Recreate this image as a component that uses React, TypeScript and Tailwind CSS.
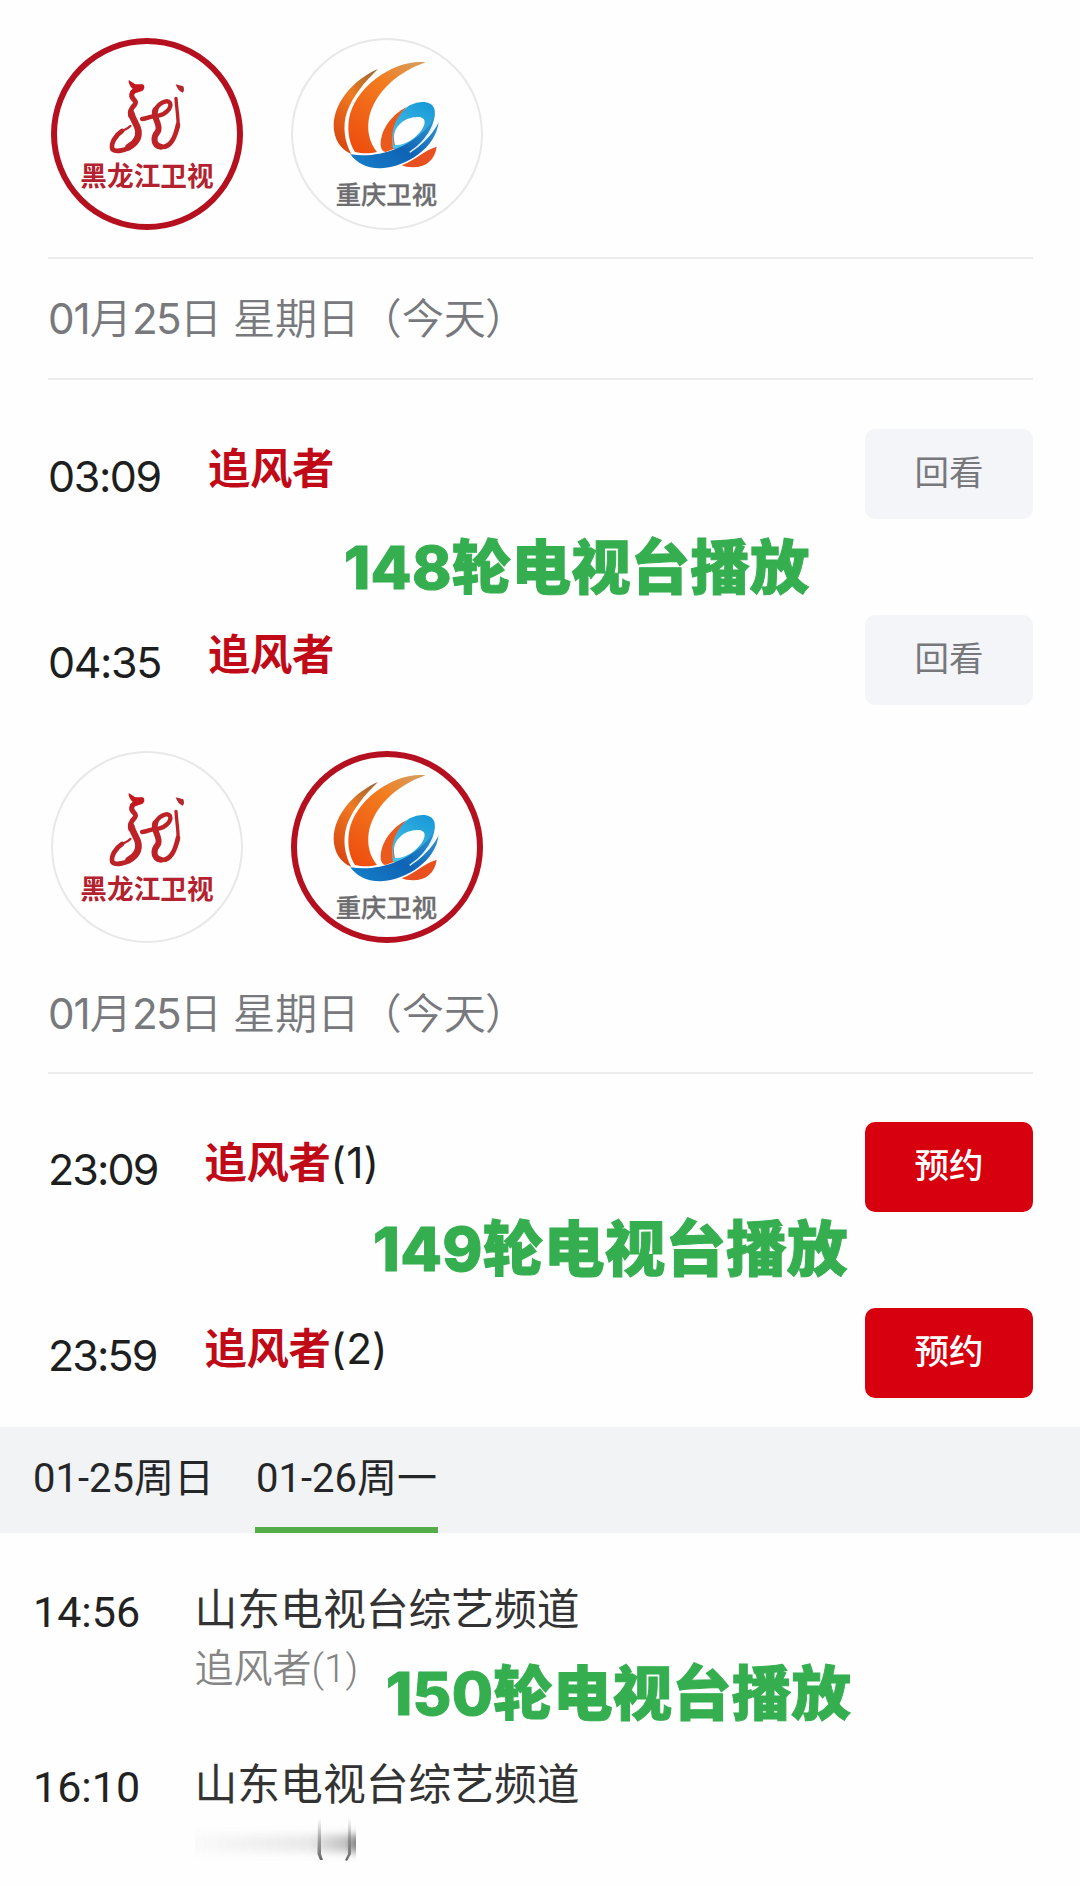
import React from 'react';

interface Programme {
  time: string;
  title: string;
  episode?: string;
}

const replayRows: Programme[] = [
  { time: '03:09', title: '追风者' },
  { time: '04:35', title: '追风者' },
];

const bookingRows: Programme[] = [
  { time: '23:09', title: '追风者', episode: '(1)' },
  { time: '23:59', title: '追风者', episode: '(2)' },
];

function HeilongjiangLogo() {
  return (
    <svg viewBox="65 54 576 576" className="w-full h-full">
      <g fill="none" stroke="#bd2226" strokeLinecap="round" strokeLinejoin="round">
        <path d="M309 218 C298 238 328 240 316 254 C306 264 300 276 304 288" strokeWidth="15" />
        <path d="M306 280 C310 300 324 312 327 332 C330 354 318 370 298 381" strokeWidth="20" />
        <path d="M314 372 C292 392 258 398 249 387 C244 370 258 346 278 333" strokeWidth="14" />
        <path d="M270 338 C282 330 296 326 303 318" strokeWidth="7" />
        <path d="M338 297 C356 296 366 286 388 287 C408 284 428 264 422 249 C414 236 386 250 377 272" strokeWidth="13" />
        <path d="M378 270 C368 292 396 312 386 334 C370 352 372 376 394 380" strokeWidth="18" />
        <path d="M390 380 C424 388 438 350 446 314" strokeWidth="14" />
        <path d="M446 322 C448 296 442 270 440 235" strokeWidth="10" />
      </g>
      <path d="M298 180 L318 193 L341 193 Q350 202 340 212 L318 220 L303 228 Q300 214 310 206 Q296 194 298 180Z" fill="#c4161c" />
      <path d="M439 193 L462 199 Q467 212 460 218 Q446 214 439 193Z" fill="#b22a30" />
      <text x="353" y="498" textAnchor="middle" fontSize="81" fontWeight="700" fill="#b3222e" textLength="400" lengthAdjust="spacingAndGlyphs">
        黑龙江卫视
      </text>
    </svg>
  );
}

function ChongqingLogo({ id }: { id: string }) {
  return (
    <svg viewBox="36 54 576 576" className="w-full h-full">
      <defs>
        <linearGradient id={`${id}-orange`} x1="0.8" y1="0" x2="0.2" y2="1">
          <stop offset="0" stopColor="#d99a55" />
          <stop offset="0.3" stopColor="#f27d1f" />
          <stop offset="1" stopColor="#ee4f0f" />
        </linearGradient>
        <linearGradient id={`${id}-rim`} x1="0.8" y1="0" x2="0.2" y2="1">
          <stop offset="0" stopColor="#a8682e" />
          <stop offset="0.4" stopColor="#ef7a22" />
          <stop offset="1" stopColor="#d8430f" />
        </linearGradient>
        <linearGradient id={`${id}-blue`} x1="1" y1="0" x2="0" y2="1">
          <stop offset="0" stopColor="#3aa3d8" />
          <stop offset="0.55" stopColor="#0f63b4" />
          <stop offset="1" stopColor="#1681cc" />
        </linearGradient>
        <linearGradient id={`${id}-cyan`} x1="0.7" y1="0" x2="0.2" y2="1">
          <stop offset="0" stopColor="#1a9bd7" />
          <stop offset="1" stopColor="#4cc3ea" />
        </linearGradient>
      </defs>
      <path d="M297 147 C232 174 164 242 164 318 C165 358 184 388 217 402 C196 364 190 318 204 276 C222 228 256 186 297 147Z" fill={`url(#${id}-rim)`} />
      <path d="M440 127 C350 116 226 198 210 298 C204 338 212 372 228 396 C252 402 276 400 294 396 C272 368 264 336 269 300 C282 226 346 160 440 127Z" fill={`url(#${id}-orange)`} />
      <path d="M382 262 C338 284 304 330 305 376 C306 388 312 396 320 396 L352 384 C338 356 344 312 382 262Z" fill="#ea5a1c" />
      <path d="M473 380 C468 420 440 442 402 442 C388 441 376 440 368 436 C410 420 434 392 473 380Z" fill="#e8501f" />
      <path fillRule="evenodd" d="M342 384 C332 340 350 282 392 256 C424 240 458 242 466 266 C474 296 452 346 412 374 C388 390 362 396 342 384Z M344 374 C372 380 410 356 428 330 C442 308 440 292 418 291 C372 290 336 326 344 374Z" fill={`url(#${id}-cyan)`} />
      <path d="M466 266 C470 292 450 322 424 342 C378 384 296 416 214 403 C232 428 262 446 306 445 C384 440 470 384 479 306 C468 330 444 364 402 392 C436 362 470 320 466 266Z" fill={`url(#${id}-blue)`} />
      <path d="M392 397 C424 376 450 344 464 314" fill="none" stroke="#d9effa" strokeWidth="4" />
      <text x="322" y="552" textAnchor="middle" fontSize="76" fontWeight="500" fill="#6d6d6f" stroke="#6d6d6f" strokeWidth="1" textLength="304" lengthAdjust="spacingAndGlyphs">
        重庆卫视
      </text>
    </svg>
  );
}

function Channel({ active, children }: { active: boolean; children: React.ReactNode }) {
  return (
    <div className="relative w-48 h-48 rounded-full">
      {children}
      <div
        className={`absolute inset-0 rounded-full ${
          active ? 'border-6 border-[#b5101f]' : 'border-2 border-[#e8e8e9]'
        }`}
      />
    </div>
  );
}

function DateLabel() {
  return (
    <div className="flex items-center text-[42.2px] leading-none text-[#77797d] whitespace-pre">
      <span className="tracking-[-1px]">01</span>
      <span className="font-[350]">月</span>
      <span className="tracking-[-1.8px]">25</span>
      <span className="font-[350]">日</span>
      <span className="ml-[11px] font-[350]">星期日（今天</span>
      <span className="-ml-px font-[350]">）</span>
    </div>
  );
}

function ProgrammeRow({ row, kind }: { row: Programme; kind: 'replay' | 'book' }) {
  return (
    <div className="flex items-center h-[90px]">
      <div
        className={`text-[43px] leading-none text-[#1d1e20] ${
          kind === 'replay' ? 'w-[160px] pt-[4px] tracking-[-1.4px]' : 'w-[156.5px] pt-[4px] tracking-[-1.9px]'
        }`}
      >
        {row.time}
      </div>
      <div className={`flex-1 text-[42.3px] leading-none text-[#1d1e20] ${kind === 'replay' ? 'pb-[10px]' : 'pb-[8px]'}`}>
        <span className="font-bold text-[#c00a18] tracking-[-0.3px]">{row.title}</span>
        <span className="tracking-[0.2px]">{row.episode}</span>
      </div>
      <button
        className={`w-[168px] h-[90px] rounded-[10px] text-[34.5px] leading-none pb-[1px] ${
          kind === 'replay' ? 'bg-[#f4f5f9] text-[#77787c]' : 'bg-[#d6000f] text-white font-medium'
        }`}
      >
        {kind === 'replay' ? '回看' : '预约'}
      </button>
    </div>
  );
}

function Caption({ round, large }: { round: number; large?: boolean }) {
  return (
    <div
      className={`flex items-center leading-none text-[#35ae50] whitespace-nowrap font-[Inter,'Noto_Sans_CJK_SC',sans-serif] [-webkit-text-stroke:1px_#35ae50] ${
        large ? 'text-[60.8px]' : 'text-[59.6px]'
      }`}
    >
      <span className="font-extrabold tracking-[0.3px]">{round}</span>
      <span className="font-black">轮电视台播放</span>
    </div>
  );
}

export default function App() {
  return (
    <div className="relative w-[1080px] h-[1886px] overflow-hidden bg-[#fefefe] font-[Inter,'Noto_Sans_CJK_SC',sans-serif]">
      {/* Heilongjiang schedule */}
      <section className="pt-[38px] pl-12 pr-[47px]">
        <div className="flex gap-12 pl-[3px] pb-[27px] border-b-2 border-[#ececed]">
          <Channel active>
            <HeilongjiangLogo />
          </Channel>
          <Channel active={false}>
            <ChongqingLogo id="cq-top" />
          </Channel>
        </div>
        <div className="flex items-center h-[121px] pt-[2px] border-b-2 border-[#ececed]">
          <DateLabel />
        </div>
        <div className="relative flex flex-col gap-24 pt-[49px]">
          {replayRows.map((row) => (
            <ProgrammeRow key={row.time} row={row} kind="replay" />
          ))}
          <div className="absolute left-[296px] top-[158px]">
            <Caption round={148} />
          </div>
        </div>
      </section>

      {/* Chongqing schedule */}
      <section className="pt-[46px] pl-12 pr-[47px]">
        <div className="flex gap-12 pl-[3px]">
          <Channel active={false}>
            <HeilongjiangLogo />
          </Channel>
          <Channel active>
            <ChongqingLogo id="cq-bottom" />
          </Channel>
        </div>
        <div className="flex items-center h-[131px] pt-[14px] border-b-2 border-[#ececed]">
          <DateLabel />
        </div>
        <div className="relative flex flex-col gap-24 pt-[48px]">
          {bookingRows.map((row) => (
            <ProgrammeRow key={row.time} row={row} kind="book" />
          ))}
          <div className="absolute left-[325px] top-[145px]">
            <Caption round={149} large />
          </div>
        </div>
      </section>

      {/* Day tabs */}
      <nav className="flex mt-[29px] h-[106px] pl-[33px] gap-[41px] bg-[#f2f3f5] text-[40px] leading-none text-[#252628] font-[Roboto,'Noto_Sans_CJK_SC',sans-serif]">
        <div className="pt-[32px]">01-25周日</div>
        <div className="pt-[32px] px-px border-b-6 border-[#54ad49]">01-26周一</div>
      </nav>

      {/* Shandong schedule */}
      <section className="relative pl-[33px] pt-[56px] font-[Roboto,'Noto_Sans_CJK_SC',sans-serif]">
        <div className="flex h-[175px]">
          <div className="w-[161.5px] pt-[2px] text-[43px] leading-none text-[#222]">14:56</div>
          <div className="leading-none">
            <div className="text-[42.8px] leading-none text-[#333]">山东电视台综艺频道</div>
            <div className="mt-[18px] text-[39px] leading-none text-[#858585] font-[350]">追风者(1)</div>
          </div>
        </div>
        <div className="flex h-[175px]">
          <div className="w-[161.5px] pt-[2px] text-[43px] leading-none text-[#222]">16:10</div>
          <div>
            <div className="text-[42.8px] leading-none text-[#333]">山东电视台综艺频道</div>
            {/* smeared-out subtitle */}
            <svg width="170" height="56" viewBox="0 0 170 56" className="mt-[11px]">
              <defs>
                <linearGradient id="smear" x1="0" x2="1" y1="0" y2="0">
                  <stop offset="0" stopColor="#999" stopOpacity="0.05" />
                  <stop offset="0.7" stopColor="#888" stopOpacity="0.18" />
                  <stop offset="0.93" stopColor="#777" stopOpacity="0.45" />
                  <stop offset="1" stopColor="#666" stopOpacity="0.8" />
                </linearGradient>
                <linearGradient id="edge" x1="0" x2="0" y1="0" y2="1">
                  <stop offset="0" stopColor="#777" stopOpacity="0" />
                  <stop offset="0.6" stopColor="#777" stopOpacity="0.7" />
                  <stop offset="1" stopColor="#666" />
                </linearGradient>
                <filter id="soften" x="-10%" y="-60%" width="120%" height="220%">
                  <feGaussianBlur stdDeviation="0.5 4" />
                </filter>
              </defs>
              <rect x="0" y="17" width="161" height="17" fill="url(#smear)" filter="url(#soften)" />
              <path d="M123 0 H126 V36 L128 42 L125 42 L122.500 36Z" fill="url(#edge)" />
              <path d="M153 0 H156 V36 L152 43 L150 42 L153 36Z" fill="url(#edge)" />
            </svg>
          </div>
        </div>
        <div className="absolute left-[386px] top-[131px]">
          <Caption round={150} />
        </div>
      </section>
    </div>
  );
}
